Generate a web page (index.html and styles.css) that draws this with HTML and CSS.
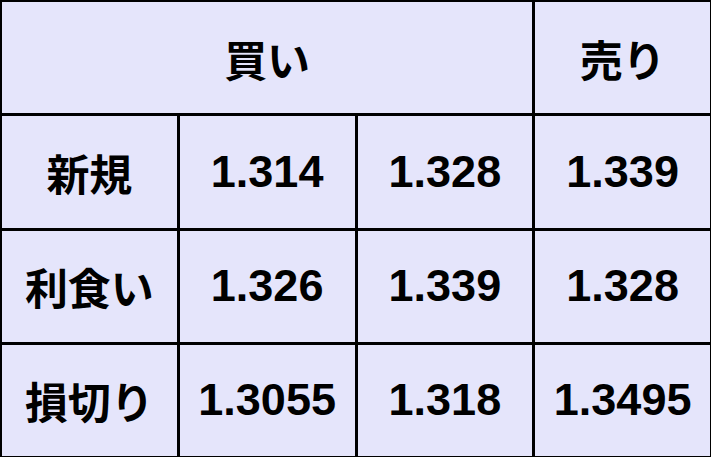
FILE: index.html
```html
<!DOCTYPE html>
<html lang="ja">
<head>
<meta charset="utf-8">
<link rel="stylesheet" href="styles.css">
</head>
<body>
<div class="table">
  <div class="cell head span3">買い</div>
  <div class="cell head">売り</div>
  <div class="cell label">新規</div>
  <div class="cell num">1.314</div>
  <div class="cell num">1.328</div>
  <div class="cell num">1.339</div>
  <div class="cell label">利食い</div>
  <div class="cell num">1.326</div>
  <div class="cell num">1.339</div>
  <div class="cell num">1.328</div>
  <div class="cell label">損切り</div>
  <div class="cell num">1.3055</div>
  <div class="cell num">1.318</div>
  <div class="cell num">1.3495</div>
</div>
</body>
</html>
```
FILE: styles.css
```css
html, body {
  margin: 0;
  padding: 0;
  background: #ffffff;
}
.table {
  width: 711px;
  height: 457px;
  box-sizing: border-box;
  background: #000000;
  padding: 2px 1px 1px 2px;
  display: grid;
  grid-template-columns: repeat(4, 1fr);
  grid-template-rows: repeat(4, 1fr);
  gap: 3px;
}
.cell {
  background: #e5e5fb;
  display: flex;
  align-items: center;
  justify-content: center;
  color: #000;
  font-weight: bold;
}
.span3 {
  grid-column: span 3;
}
.head, .label {
  font-family: "Noto Sans CJK JP", "Noto Sans", sans-serif;
  font-size: 43px;
}
.num {
  font-family: "Liberation Sans", Arial, sans-serif;
  font-size: 45px;
}
```
